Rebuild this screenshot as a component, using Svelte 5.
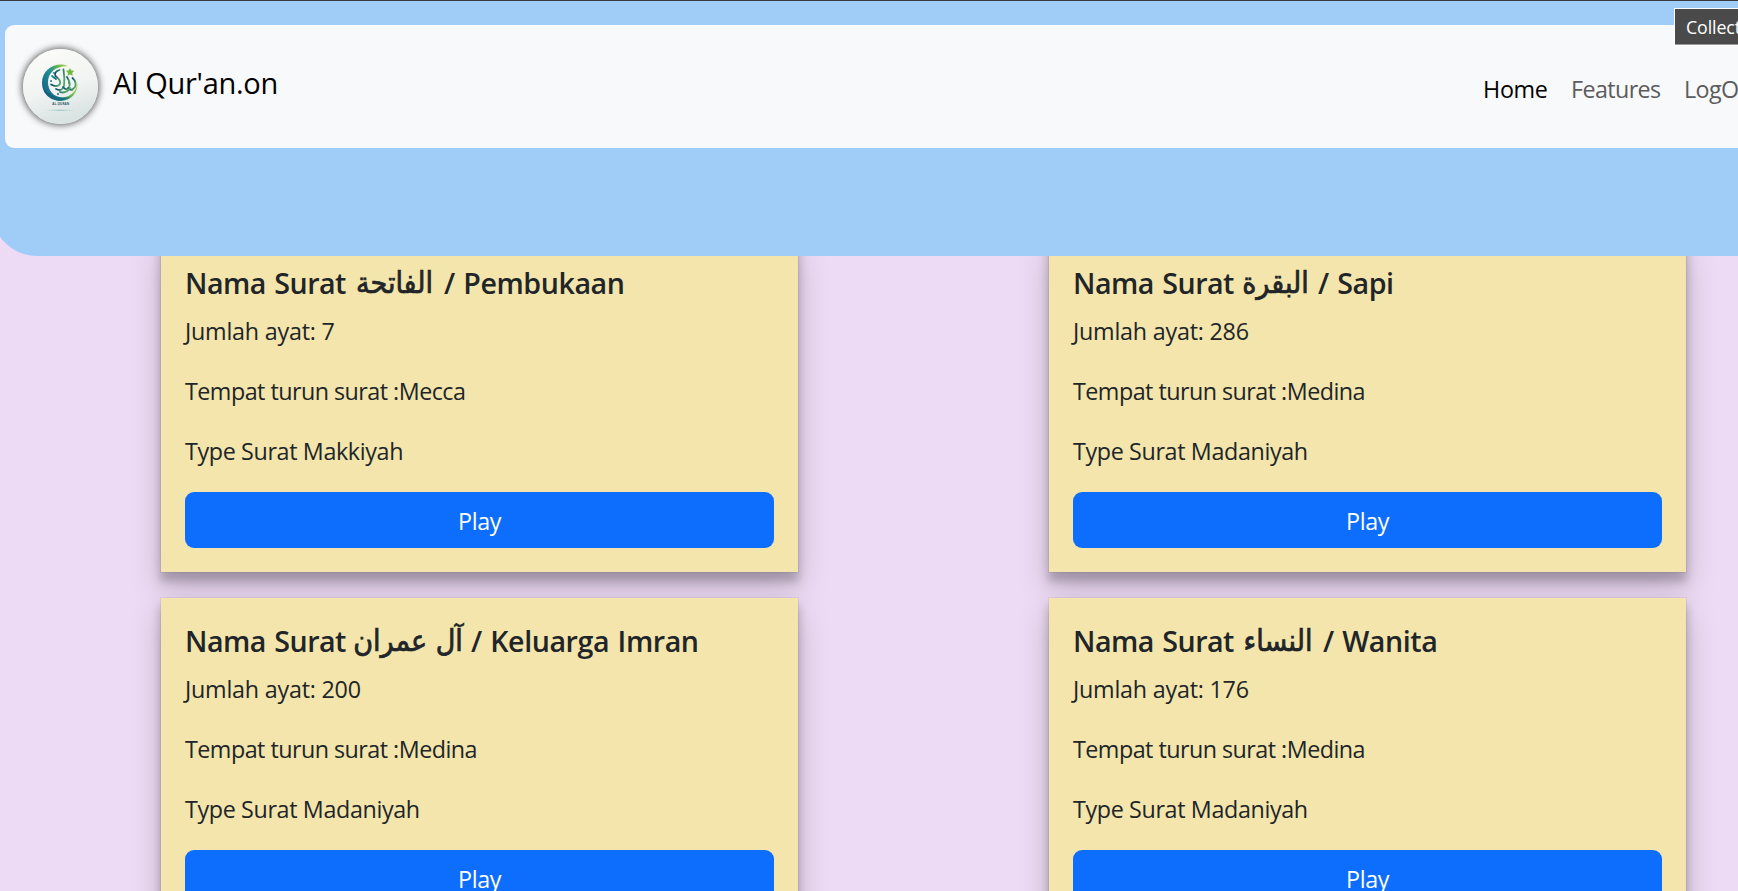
<script>
  const surahs = [
    { arabic: 'الفاتحة', meaning: 'Pembukaan', verses: 7, place: 'Mecca', type: 'Makkiyah', width: 79 },
    { arabic: 'البقرة', meaning: 'Sapi', verses: 286, place: 'Medina', type: 'Madaniyah', width: 65 },
    { arabic: 'آل عمران', meaning: 'Keluarga Imran', verses: 200, place: 'Medina', type: 'Madaniyah', width: 106 },
    { arabic: 'النساء', meaning: 'Wanita', verses: 176, place: 'Medina', type: 'Madaniyah', width: 70 }
  ];
</script>

<div class="page">
  <header>
    <nav>
      <a class="brand" href="#home">
        <span class="logo">
          <svg viewBox="0 0 75 75" width="75" height="75" aria-hidden="true">
            <defs>
              <linearGradient id="bg" x1="0" y1="0" x2="0.3" y2="1">
                <stop offset="0" stop-color="#fdfdfb" />
                <stop offset="0.6" stop-color="#f1f4f2" />
                <stop offset="1" stop-color="#dae4e3" />
              </linearGradient>
              <linearGradient id="moon" x1="0.05" y1="0.7" x2="0.9" y2="0.3">
                <stop offset="0" stop-color="#17698a" />
                <stop offset="0.4" stop-color="#218f91" />
                <stop offset="0.72" stop-color="#76b94f" />
                <stop offset="1" stop-color="#c5d84f" />
              </linearGradient>
              <linearGradient id="ink" x1="0" y1="0" x2="1" y2="0.4">
                <stop offset="0" stop-color="#178a93" />
                <stop offset="0.5" stop-color="#164f66" />
                <stop offset="1" stop-color="#4fa46b" />
              </linearGradient>
              <radialGradient id="floor">
                <stop offset="0" stop-color="#93c5b9" />
                <stop offset="1" stop-color="#dfe9e6" stop-opacity="0" />
              </radialGradient>
            </defs>
            <circle cx="37.5" cy="37.5" r="37.5" fill="url(#bg)" />
            <ellipse cx="37.5" cy="61.3" rx="20" ry="1.5" fill="url(#floor)" />
            <path d="M46 17.4C35 11.5 19 19 19 33.8C19 46 29 52 37.5 52C48 52 55.5 43.5 54.6 32.5C54 42 47.5 48.3 39.5 48.3C30.5 48.3 25 41.5 25 33C25 22.5 35 15.8 46 17.4Z" fill="url(#moon)" />
            <path d="M20 40A18 18 0 0 0 48 47.5Q38 51 29 46Q23 43 20 40Z" fill="#144f70" opacity="0.5" />
            <g fill="none" stroke="url(#ink)" stroke-width="1.8" stroke-linecap="round" stroke-linejoin="round">
              <path d="M36.5 21Q30.5 23 32.5 27Q38 31 37 35Q34 39 28 35.5" />
              <path d="M40.5 20.5Q42 29 41 37Q39 43 33 40" />
              <path d="M44 28Q48 34 46 38.5Q43 42 40 38" />
              <path d="M49.5 29Q54 33 52 38Q48 43 45 39" />
              <path d="M29 27L33 30M37 43Q43 45 47 39" />
              <path d="M28 32h.1M31 24h.1M46 34h.1M49 41h.1M35 45h.1" />
            </g>
            <path d="M47 18.9l1.4 2.5 2.9.4-2.1 2.1.6 2.9-2.7-1.4-2.6 1.4.5-2.9-2.1-2.1 2.8-.4z" fill="#72b83d" />
            <text x="37.7" y="56.2" text-anchor="middle" textLength="17">AL-QURAN</text>
          </svg>
        </span>
        <span class="name">Al Qur'an.on</span>
      </a>
      <div class="links">
        <a class="active" href="#home">Home</a>
        <a class="features" href="#features">Features</a>
        <a href="#logout">LogOut</a>
      </div>
    </nav>
  </header>

  <main>
    {#each surahs as surah}
      <article>
        <h5><span>Nama Surat</span><bdi style="width: {surah.width}px">{surah.arabic}</bdi><span>/ {surah.meaning}</span></h5>
        <p class="verses">Jumlah ayat: {surah.verses}</p>
        <p class="place">Tempat turun surat :{surah.place}</p>
        <p class="type">Type Surat {surah.type}</p>
        <button>Play</button>
      </article>
    {/each}
  </main>

  <div class="tip">Collections</div>
</div>

<style>
  :global(body) { background: #eddaf4; overflow: hidden; }
  .page {
    position: relative;
    width: 1738px;
    height: 891px;
    overflow: hidden;
    font-family: "Open Sans", "Noto Sans", sans-serif;
    color: #212529;
  }
  a { color: inherit; text-decoration: none; }
  header {
    position: relative;
    z-index: 2;
    box-sizing: border-box;
    height: 256px;
    margin: 0 -60px 0 -8px;
    padding: 24px 0 0 13px;
    border-top: 1px solid #383a40;
    border-radius: 0 0 45px 45px;
    background: #a0cdf7;
  }
  nav {
    box-sizing: border-box;
    display: flex;
    justify-content: space-between;
    height: 123px;
    padding: 24px 0 0 18px;
    border-radius: 9px;
    background: #f8f9fa;
  }
  .brand { display: flex; gap: 15px; }
  .logo {
    width: 75px;
    height: 75px;
    border-radius: 50%;
    box-shadow: 0 0 7px 1px rgba(0, 0, 0, .65);
  }
  .logo svg { display: block; }
  .logo text { font: 700 3px "Open Sans", sans-serif; fill: #285462; }
  .name { font-size: 29px; line-height: 45px; margin-top: 11px; letter-spacing: -.3px; color: #000; white-space: nowrap; }
  .links {
    display: flex;
    width: 315px;
    padding-top: 22px;
    font-size: 23.3px;
    line-height: 36px;
    letter-spacing: -.6px;
    color: #5b5c5d;
  }
  .links a { flex: none; width: 113px; }
  .links .active { width: 88px; color: #000; letter-spacing: -.3px; }
  main {
    display: grid;
    grid-template-columns: 639px 639px;
    column-gap: 249px;
    row-gap: 24px;
    padding-left: 160px;
    margin-top: -17px;
  }
  article {
    box-sizing: border-box;
    position: relative;
    height: 334px;
    padding: 24px;
    border: 1px solid rgba(0, 0, 0, .05);
    background: #f3e5ab;
    background-clip: padding-box;
    box-shadow: 0 15px 30px rgba(0, 0, 0, .17), 0 9px 9px rgba(0, 0, 0, .21);
  }
  h5 {
    display: flex;
    margin: 0 0 13px;
    height: 36px;
    font-size: 28.6px;
    font-weight: 600;
    line-height: 38px;
    letter-spacing: -.42px;
    word-spacing: 1.5px;
    white-space: nowrap;
  }
  h5 span:first-child { width: 170px; letter-spacing: -.5px; }
  bdi {
    display: flex;
    justify-content: center;
    margin-right: 10px;
    font-family: "DejaVu Sans Condensed", "DejaVu Sans", sans-serif;
    font-size: 30px;
    font-stretch: condensed;
    font-weight: 400;
    letter-spacing: 0;
    word-spacing: 0;
    -webkit-text-stroke: .7px #212529;
  }
  p { margin: 0 0 24px; font-size: 23.3px; line-height: 36px; }
  .verses { letter-spacing: -.22px; }
  .place { letter-spacing: -.52px; }
  .type { margin-bottom: 23px; letter-spacing: -.36px; }
  button {
    display: block;
    width: 589px;
    height: 56px;
    padding: 0;
    border: 0;
    border-radius: 9px;
    background: #0d6efd;
    color: #fff;
    font: 23.3px/59px "Open Sans", sans-serif;
    letter-spacing: -.4px;
  }
  .tip {
    position: absolute;
    z-index: 3;
    top: 8px;
    left: 1674px;
    box-sizing: border-box;
    width: 110px;
    height: 38px;
    padding-left: 11px;
    border: 1px solid #fff;
    background: #4a4a4a;
    box-shadow: inset 0 -1px #999;
    color: #fff;
    font-size: 17.8px;
    line-height: 37px;
    letter-spacing: -.1px;
  }
</style>
